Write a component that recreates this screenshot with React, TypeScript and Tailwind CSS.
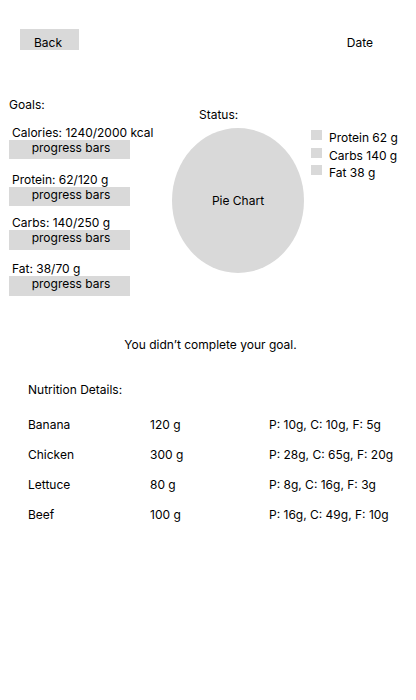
const GOALS = [
  { label: 'Calories: 1240/2000 kcal', wrap: 'mt-[13px]', bar: 'h-[19px]' },
  { label: 'Protein: 62/120 g', wrap: 'mt-[13px]', bar: 'h-[19px]' },
  { label: 'Carbs: 140/250 g', wrap: 'mt-[9px]', bar: 'h-[20px]' },
  { label: 'Fat: 38/70 g', wrap: 'mt-[11px]', bar: 'h-[20px]' },
]

const LEGEND = ['Protein 62 g', 'Carbs 140 g', 'Fat 38 g']

const FOODS = [
  { name: 'Banana', weight: '120 g', macros: 'P: 10g, C: 10g, F: 5g' },
  { name: 'Chicken', weight: '300 g', macros: 'P: 28g, C: 65g, F: 20g' },
  { name: 'Lettuce', weight: '80 g', macros: 'P: 8g, C: 16g, F: 3g' },
  { name: 'Beef', weight: '100 g', macros: 'P: 16g, C: 49g, F: 10g' },
]

export default function App() {
  return (
    <div
      className="min-h-[700px] w-[416px] bg-white text-[12px] leading-[15px] text-black"
      style={{ fontFamily: 'Inter, "Liberation Sans", sans-serif' }}
    >
      {/* Header */}
      <header className="flex items-start justify-between pl-[20px] pr-[43px] pt-[29px]">
        <button className="h-[21px] w-[59px] bg-[#d9d9d9] pl-[14px] pt-[6px] text-left">
          Back
        </button>
        <span className="pt-[6px]">Date</span>
      </header>

      {/* Goals + status */}
      <section className="mt-[47px] flex">
        <div className="w-[172px] pl-[9px]">
          <p>Goals:</p>
          {GOALS.map((g) => (
            <div key={g.label} className={g.wrap}>
              <p className="pl-[3px]">{g.label}</p>
              <div className={`${g.bar} flex w-[121px] justify-center bg-[#d9d9d9] pl-[3px]`}>
                progress bars
              </div>
            </div>
          ))}
        </div>

        <div className="w-[132px] pt-[10px]">
          <p className="pl-[27px]">Status:</p>
          <div className="mt-[6px] flex h-[145px] w-[132px] items-center justify-center rounded-[50%] bg-[#d9d9d9]">
            Pie Chart
          </div>
        </div>

        <ul className="ml-[7px] flex flex-col gap-[2.5px] pt-[33px]">
          {LEGEND.map((l) => (
            <li key={l} className="flex items-start gap-[7px]">
              <span className="h-[10px] w-[11px] shrink-0 bg-[#d9d9d9]" />
              <span className="whitespace-nowrap">{l}</span>
            </li>
          ))}
        </ul>
      </section>

      <p className="mt-[41px] pl-[5px] text-center">You didn’t complete your goal.</p>

      {/* Nutrition details */}
      <section className="mt-[30px] pl-[28px]">
        <p>Nutrition Details:</p>
        <div className="mt-[20px] flex flex-col gap-[15px]">
          {FOODS.map((f) => (
            <div key={f.name} className="flex">
              <span className="w-[122px]">{f.name}</span>
              <span className="w-[119px]">{f.weight}</span>
              <span>{f.macros}</span>
            </div>
          ))}
        </div>
      </section>
    </div>
  )
}
